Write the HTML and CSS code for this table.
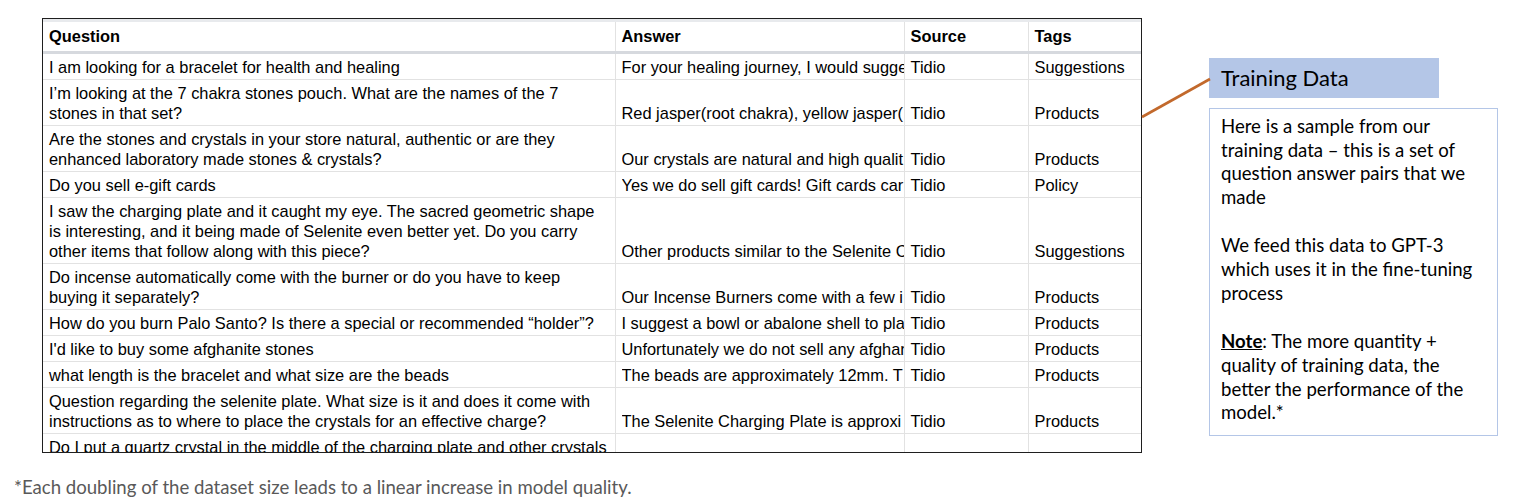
FILE: index.html
```html
<!DOCTYPE html>
<html>
<head>
<meta charset="utf-8">
<link rel="stylesheet" href="styles.css">
</head>
<body>
<div class="slide">
  <div class="top">
    <div class="sheet">
      <table class="grid">
        <colgroup>
          <col class="c-q"><col class="c-a"><col class="c-s"><col class="c-t">
        </colgroup>
        <thead>
          <tr><th>Question</th><th>Answer</th><th>Source</th><th>Tags</th></tr>
        </thead>
        <tbody>
          <tr><td class="q">I am looking for a bracelet for health and healing</td><td class="a"><div class="clip">For your healing journey, I would sugge</div></td><td>Tidio</td><td>Suggestions</td></tr>
          <tr><td class="q">I’m looking at the 7 chakra stones pouch. What are the names of the 7 stones in that set?</td><td class="a"><div class="clip">Red jasper(root chakra), yellow jasper(</div></td><td>Tidio</td><td>Products</td></tr>
          <tr><td class="q">Are the stones and crystals in your store natural, authentic or are they enhanced laboratory made stones &amp; crystals?</td><td class="a"><div class="clip">Our crystals are natural and high qualit</div></td><td>Tidio</td><td>Products</td></tr>
          <tr><td class="q">Do you sell e-gift cards</td><td class="a"><div class="clip">Yes we do sell gift cards! Gift cards car</div></td><td>Tidio</td><td>Policy</td></tr>
          <tr><td class="q">I saw the charging plate and it caught my eye. The sacred geometric shape is interesting, and it being made of Selenite even better yet. Do you carry other items that follow along with this piece?</td><td class="a"><div class="clip">Other products similar to the Selenite C</div></td><td>Tidio</td><td>Suggestions</td></tr>
          <tr><td class="q">Do incense automatically come with the burner or do you have to keep buying it separately?</td><td class="a"><div class="clip">Our Incense Burners come with a few i</div></td><td>Tidio</td><td>Products</td></tr>
          <tr><td class="q">How do you burn Palo Santo? Is there a special or recommended “holder”?</td><td class="a"><div class="clip">I suggest a bowl or abalone shell to pla</div></td><td>Tidio</td><td>Products</td></tr>
          <tr><td class="q">I'd like to buy some afghanite stones</td><td class="a"><div class="clip">Unfortunately we do not sell any afghar</div></td><td>Tidio</td><td>Products</td></tr>
          <tr><td class="q">what length is the bracelet and what size are the beads</td><td class="a"><div class="clip">The beads are approximately 12mm. T</div></td><td>Tidio</td><td>Products</td></tr>
          <tr><td class="q">Question regarding the selenite plate. What size is it and does it come with instructions as to where to place the crystals for an effective charge?</td><td class="a"><div class="clip">The Selenite Charging Plate is approxi</div></td><td>Tidio</td><td>Products</td></tr>
          <tr class="last"><td class="q">Do I put a quartz crystal in the middle of the charging plate and other crystals</td><td class="a"></td><td></td><td></td></tr>
        </tbody>
      </table>
    </div>
    <div class="callout">
      <div class="callout-title">Training Data</div>
      <div class="callout-body">
        <p>Here is a sample from our<br>training data – this is a set of<br>question answer pairs that we<br>made</p>
        <p>We feed this data to GPT-3<br>which uses it in the fine-tuning<br>process</p>
        <p><u><b>Note</b></u>: The more quantity +<br>quality of training data, the<br>better the performance of the<br>model.*</p>
      </div>
    </div>
  </div>
  <p class="footnote">*Each doubling of the dataset size leads to a linear increase in model quality.</p>
  <svg class="connector" width="80" height="50" viewBox="0 0 80 50">
    <line x1="1" y1="46" x2="69" y2="8" stroke="#c2692c" stroke-width="2.6"/>
  </svg>
</div>
</body>
</html>
```

FILE: styles.css
```css
* { box-sizing: border-box; }
html, body { margin: 0; padding: 0; background: #fff; }
body { width: 1520px; height: 498px; overflow: hidden; }

.slide { position: relative; width: 1520px; height: 498px; }

.top { display: flex; align-items: flex-start; padding: 18px 0 0 42px; }

.sheet {
  width: 1100px;
  height: 435px;
  border: 1px solid #1f1f1f;
  overflow: hidden;
  flex: none;
}

.grid {
  width: 1098px;
  table-layout: fixed;
  border-collapse: collapse;
  font-family: "Liberation Sans", Arial, sans-serif;
  font-size: 16.4px;
  line-height: 20px;
  color: #000;
}
.c-q { width: 572px; }
.c-a { width: 289px; }
.c-s { width: 124px; }
.c-t { width: 113px; }

.grid th {
  text-align: left;
  font-weight: bold;
  height: 32px;
  padding: 3px 6px 5px;
  border-top: 3px solid #e8eaed;
  border-left: 1px solid #e2e2e2;
  border-bottom: 3px solid #d6d9de;
  vertical-align: bottom;
  white-space: nowrap;
}
.grid th:first-child, .grid td:first-child { border-left: none; }

.grid td {
  padding: 3px 5px 2px 6px;
  border-left: 1px solid #e2e2e2;
  border-bottom: 1px solid #e2e2e2;
  vertical-align: bottom;
  white-space: nowrap;
  overflow: hidden;
}
.grid td.q { white-space: normal; padding-right: 4px; }
.grid td.a { padding-right: 0; }
.clip { overflow: hidden; white-space: nowrap; }

.callout { margin-left: 67px; margin-top: 40px; width: 289px; flex: none; }

.callout-title {
  width: 230px;
  height: 40px;
  background: #b4c6e7;
  font-family: Lato, "Open Sans", sans-serif;
  font-size: 22px;
  line-height: 26px;
  color: #000;
  padding: 7px 0 0 12px;
}

.callout-body {
  margin-top: 10px;
  height: 328px;
  border: 1px solid #b4c6e7;
  padding: 6px 6px 0 11px;
  font-family: Lato, "Open Sans", sans-serif;
  font-size: 18.6px;
  line-height: 23.7px;
  color: #000;
}
.callout-body p { margin: 0 0 24.6px; }

.footnote {
  margin: 23px 0 0 14px;
  font-family: Lato, "Open Sans", sans-serif;
  font-size: 18.6px;
  line-height: 22px;
  color: #595959;
}

.connector { position: absolute; left: 1141px; top: 71px; }
```
